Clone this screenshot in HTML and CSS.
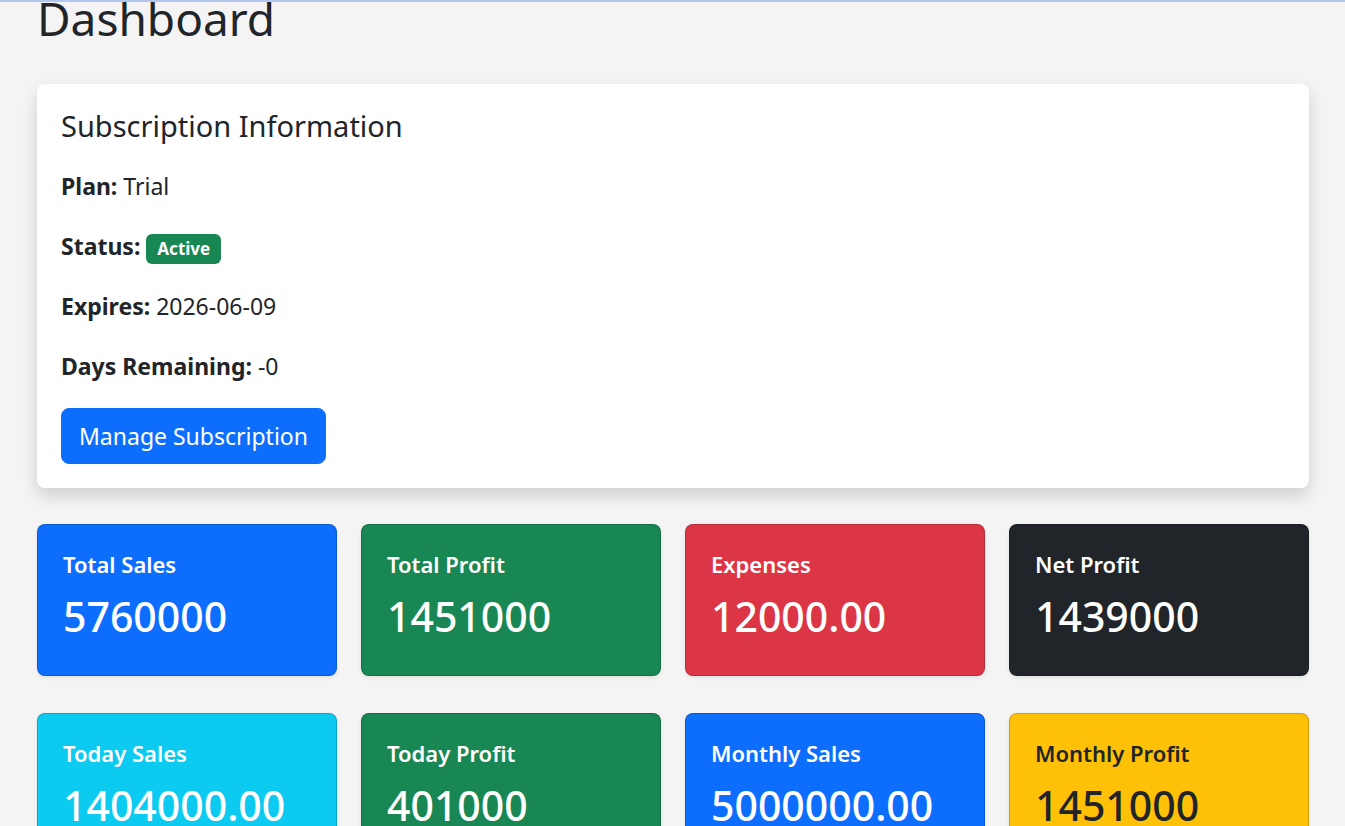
FILE: index.html
```html
<!DOCTYPE html>
<html lang="en">
<head>
    <meta charset="UTF-8">
    <title>Dashboard</title>
    <link rel="stylesheet" href="styles.css">
</head>
<body>
    <div class="page">
        <h1 class="page-title">Dashboard</h1>

        <div class="sub-card">
            <h4 class="sub-title">Subscription Information</h4>
            <p><strong>Plan:</strong> Trial</p>
            <p><strong>Status:</strong> <span class="badge">Active</span></p>
            <p><strong>Expires:</strong> 2026-06-09</p>
            <p><strong>Days Remaining:</strong> -0</p>
            <a class="btn-manage" href="#">Manage Subscription</a>
        </div>

        <div class="stats">
            <div class="stat bg-blue">
                <h5 class="stat-title">Total Sales</h5>
                <h2 class="stat-value">5760000</h2>
            </div>
            <div class="stat bg-green">
                <h5 class="stat-title">Total Profit</h5>
                <h2 class="stat-value">1451000</h2>
            </div>
            <div class="stat bg-red">
                <h5 class="stat-title">Expenses</h5>
                <h2 class="stat-value">12000.00</h2>
            </div>
            <div class="stat bg-dark">
                <h5 class="stat-title">Net Profit</h5>
                <h2 class="stat-value">1439000</h2>
            </div>
            <div class="stat bg-cyan">
                <h5 class="stat-title">Today Sales</h5>
                <h2 class="stat-value">1404000.00</h2>
            </div>
            <div class="stat bg-green">
                <h5 class="stat-title">Today Profit</h5>
                <h2 class="stat-value">401000</h2>
            </div>
            <div class="stat bg-blue">
                <h5 class="stat-title">Monthly Sales</h5>
                <h2 class="stat-value">5000000.00</h2>
            </div>
            <div class="stat bg-yellow">
                <h5 class="stat-title">Monthly Profit</h5>
                <h2 class="stat-value">1451000</h2>
            </div>
        </div>
    </div>
</body>
</html>
```

FILE: styles.css
```css
html, body {
    margin: 0;
    height: 100%;
    overflow: hidden;
}
body {
    background: #f4f4f4;
    color: #212529;
    font-family: "Noto Sans", "Open Sans", sans-serif;
    border-top: 2px solid #b4c7ee;
    box-sizing: border-box;
}
.page {
    padding: 0 36px 0 37px;
}
.page-title {
    font-size: 46px;
    font-weight: 400;
    line-height: 1.2;
    margin: -11px 0 38px;
}
.sub-card {
    background: #fff;
    border-radius: 8px;
    box-shadow: 0 8px 16px rgba(0,0,0,.15);
    padding: 25px 24px 24px;
    height: 404px;
    box-sizing: border-box;
    margin-bottom: 36px;
}
.sub-title {
    font-size: 29px;
    font-weight: 400;
    line-height: 1.2;
    margin: 0 0 25.5px;
}
.sub-card p {
    font-size: 23px;
    line-height: 34.5px;
    margin: 0 0 25.5px;
}
.sub-card p:nth-of-type(4) {
    margin-bottom: 24.5px;
}
.badge {
    display: inline-block;
    background: #198754;
    color: #fff;
    font-size: 17px;
    font-weight: 700;
    line-height: 17px;
    padding: 6.5px 11px;
    border-radius: 6px;
}
.btn-manage {
    display: inline-block;
    background: #0d6efd;
    border: 1px solid #0d6efd;
    color: #fff;
    text-decoration: none;
    font-size: 23px;
    line-height: 34px;
    padding: 10px 17px;
    border-radius: 8px;
}
.stats {
    display: grid;
    grid-template-columns: repeat(4, 1fr);
    column-gap: 24px;
    row-gap: 37px;
}
.stat {
    height: 152px;
    box-sizing: border-box;
    border: 1px solid rgba(0,0,0,.175);
    border-radius: 8px;
    box-shadow: 0 2px 4px rgba(0,0,0,.075);
    padding: 26px 25px 24px;
    color: #fff;
}
.stat-title {
    font-size: 22px;
    font-weight: 600;
    line-height: 1.2;
    margin: 0 0 14px;
}
.stat-value {
    font-size: 41px;
    font-weight: 500;
    line-height: 1.2;
    margin: 0;
}
.bg-blue { background: #0d6efd; }
.bg-green { background: #198754; }
.bg-red { background: #dc3545; }
.bg-dark { background: #212529; }
.bg-cyan { background: #0dcaf0; }
.bg-yellow { background: #ffc107; color: #212529; }
```
